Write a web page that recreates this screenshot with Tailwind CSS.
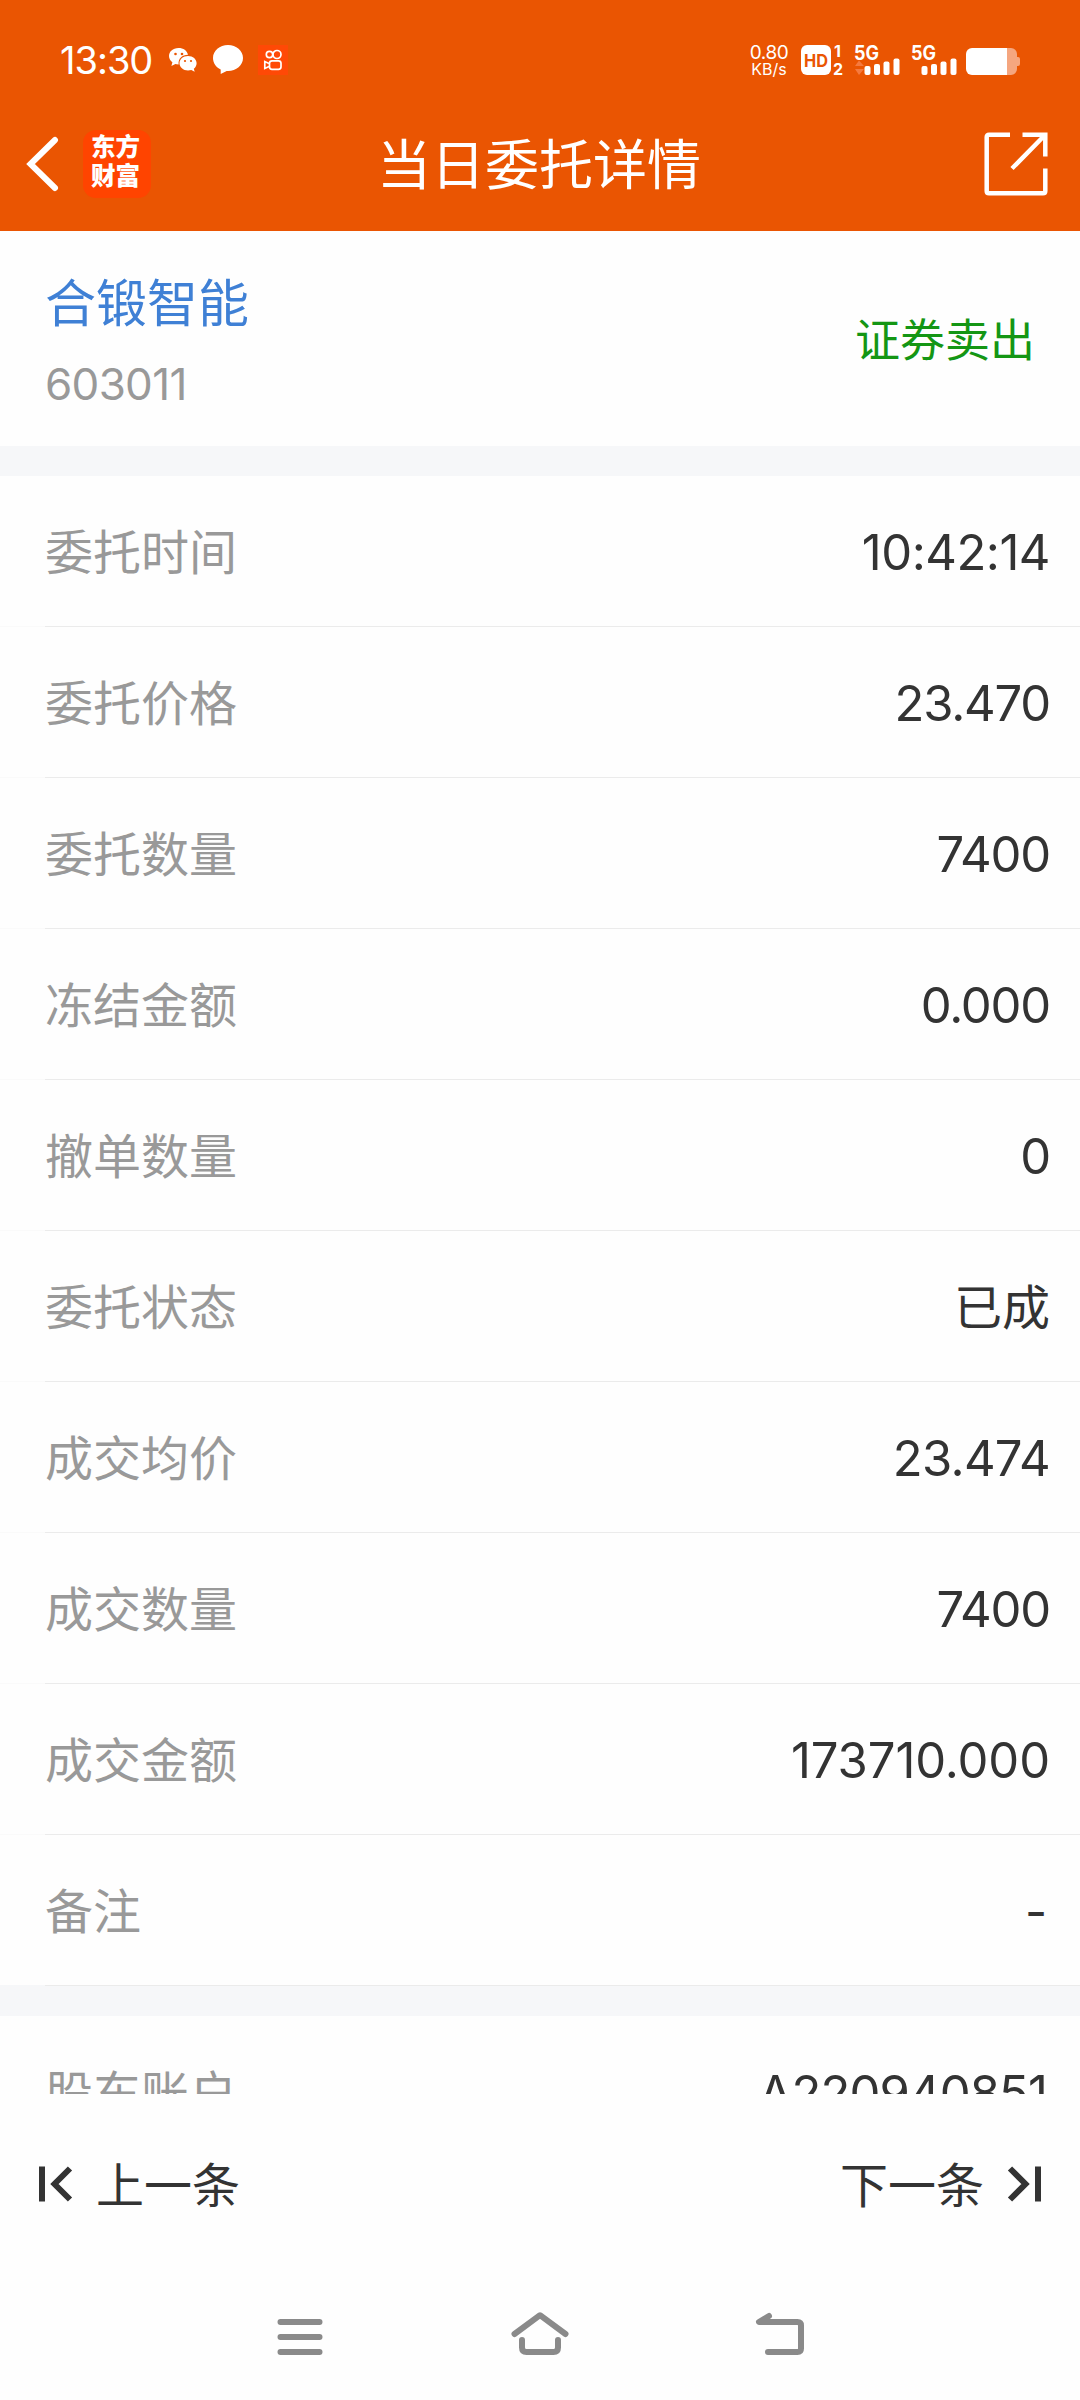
<!DOCTYPE html>
<html lang="zh-CN">
<head>
    <meta charset="UTF-8">
    <meta name="viewport" content="width=device-width, initial-scale=1.0">
    <title>当日委托详情</title>
    <script src="https://cdn.jsdelivr.net/npm/@tailwindcss/browser@4"></script>
</head>
<body class="bg-white font-['Inter','Noto_Sans_CJK_SC',sans-serif]">
    <div id="app" class="w-[1080px] h-[2400px] flex flex-col overflow-hidden bg-[#fefefe]">
        <!-- Header -->
        <header class="h-[231px] shrink-0 bg-[#ea5502] text-white">
            <!-- Status bar -->
            <div class="h-[120px] flex items-center justify-between pl-[60px] pr-[60px]">
                <div class="flex items-center">
                    <span class="w-[108px] text-[38px] leading-none tracking-[-1px] whitespace-nowrap">13:30</span>
                    <svg class="w-[30px] h-[30px]" viewBox="0 0 30 30">
                        <path fill="#fff" d="M10.500 3C4.700 3 1 6.700 1 11c0 2.600 1.300 4.700 3.400 6.200L3.400 21l4-2c1 .3 2 .4 3.200.4C10 13.500 14 9.900 20 9.800 19 5.700 15.500 3 10.500 3z"></path>
                        <path fill="#fff" d="M20 11c-5 0-8.500 3.200-8.500 7.200s3.700 7.200 8.500 7.200c1.200 0 2.300-.2 3.300-.5l3.400 1.900-.9-3.100c1.800-1.300 2.800-3.300 2.800-5.500C28.600 14.200 25 11 20 11z"></path>
                        <g fill="#ea5502"><circle cx="7.500" cy="9" r="1.300"></circle><circle cx="14" cy="9" r="1.300"></circle><circle cx="17" cy="16" r="1.100"></circle><circle cx="23" cy="16" r="1.100"></circle></g>
                    </svg>
                    <svg class="w-[30px] h-[30px] ml-[15px]" viewBox="0 0 30 30">
                        <path fill="#fff" d="M15 0C6.700 0 0 5.800 0 13c0 5 3 9.200 7.700 11.500V29l6-3H15c8.300 0 15-5.800 15-13S23.300 0 15 0z"></path>
                    </svg>
                    <svg class="w-[30px] h-[30px] ml-[15px] bg-[#ff4906]" viewBox="0 0 30 30" fill="none" stroke="#fff" stroke-width="1.700">
                        <circle cx="11.500" cy="9.500" r="3.200"></circle>
                        <circle cx="19" cy="9.500" r="4"></circle>
                        <rect x="11.500" y="15.800" width="11.500" height="8.500" rx="2.500"></rect>
                        <path d="M11 18.500l-4.200-2v7l4.200-2"></path>
                    </svg>
                </div>
                <div class="flex items-center">
                    <div class="w-[38px] mr-[13px] flex flex-col items-center whitespace-nowrap">
                        <span class="text-[19px] leading-[17px] tracking-[-0.5px]">0.80</span>
                        <span class="text-[16px] leading-[16px]">KB/s</span>
                    </div>
                    <svg class="w-[44px] h-[30px] mr-[10px] overflow-visible" viewBox="0 0 44 30" font-family="Inter" font-weight="700">
                        <rect width="30" height="30" rx="6" fill="#fff"></rect>
                        <text x="3" y="21.500" font-size="18" textLength="24" lengthAdjust="spacingAndGlyphs" fill="#ea5502">HD</text>
                        <text x="33" y="12" font-size="16" fill="#fff">1</text>
                        <text x="32" y="30" font-size="16" fill="#fff">2</text>
                    </svg>
                    <svg class="w-[45px] h-[30px] mr-[12px] overflow-visible" viewBox="0 0 45 30" fill="#fff">
                        <text x="-1" y="14.500" font-family="Inter" font-weight="700" font-size="19.500" textLength="25" lengthAdjust="spacingAndGlyphs">5G</text>
                        <path fill="#f57a3f" d="M0 21l4-5.500 5 5.500zM0 24l4 6 5-6z"></path>
                        <rect x="9.500" y="21" width="6" height="9" rx="2"></rect>
                        <rect x="19" y="19" width="6" height="11" rx="2"></rect>
                        <rect x="28.500" y="16.500" width="6" height="13.500" rx="2"></rect>
                        <rect x="38.500" y="13.500" width="6" height="16.500" rx="2"></rect>
                    </svg>
                    <svg class="w-[45px] h-[30px] mr-[9px] overflow-visible" viewBox="0 0 45 30" fill="#fff">
                        <text x="-1" y="14.500" font-family="Inter" font-weight="700" font-size="19.500" textLength="25" lengthAdjust="spacingAndGlyphs">5G</text>
                        <rect x="9.500" y="21" width="6" height="9" rx="2"></rect>
                        <rect x="19" y="19" width="6" height="11" rx="2"></rect>
                        <rect x="28.500" y="16.500" width="6" height="13.500" rx="2"></rect>
                        <rect x="38.500" y="13.500" width="6" height="16.500" rx="2"></rect>
                    </svg>
                    <svg class="w-[54px] h-[30px]" viewBox="0 0 54 30">
                        <path fill="#f5a67f" d="M41 3h4a6 6 0 0 1 6 6v3h1q2 0 2 2v5q0 2-2 2h-1v3a6 6 0 0 1-6 6h-4z"></path>
                        <path fill="#fff" d="M6 3h35v27H6a6 6 0 0 1-6-6V9a6 6 0 0 1 6-6z"></path>
                    </svg>
                </div>
            </div>

            <!-- Title bar -->
            <div class="h-[87px] grid grid-cols-3 items-center pl-[26px] pr-[32px]">
                <div class="flex items-center">
                    <svg class="w-[34px] h-[56px]" viewBox="0 0 34 56" fill="none" stroke="#fff" stroke-width="6">
                        <path stroke-linecap="round" d="M29 4L4.500 28 29 52"></path>
                    </svg>
                    <div class="w-[68px] h-[68px] ml-[23px] rounded-[13px] bg-[#ff4400] text-center font-black text-[24.500px] leading-[29px] pt-[3px] pr-[3px]">
                        东方<br>财富
                    </div>
                </div>
                <h1 class="text-[54px] leading-none whitespace-nowrap justify-self-center -mr-[4px] pt-[5px]">当日委托详情</h1>
                <svg class="w-[64px] h-[64px] justify-self-end" viewBox="0 0 64 64" fill="none" stroke="#fff" stroke-width="4.500">
                    <path d="M26 2.700H5Q2.700 2.700 2.700 5v54q0 2.300 2.300 2.300h54q2.300 0 2.300-2.300V36.500"></path>
                    <path d="M38.500 2.700h22.800V24.500M61 3L28 36.500"></path>
                </svg>
            </div>
        </header>

        <!-- Order details -->
        <main class="h-[1863px] shrink-0 overflow-hidden text-[48px] text-[#333]">
            <div class="h-[215px] flex items-center justify-between px-[45px] pt-[4px]">
                <div class="pt-[6px]">
                    <h2 class="text-[51px] leading-[80px] text-[#3f80d5]">合锻智能</h2>
                    <p class="text-[44px] leading-[80px] tracking-[-0.7px] text-[#999]">603011</p>
                </div>
                <span class="text-[45px] text-[#149614]">证券卖出</span>
            </div>
            <div class="h-[30px] bg-[#f6f7f9]"></div>

            <div class="h-[151px] flex flex-col">
                <div class="flex-1 flex items-center justify-between pt-[4px] pl-[45px] pr-[30px]"><span class="text-[#999]">委托时间</span><span class="text-[49px] tracking-[-0.5px]">10:42:14</span></div>
                <div class="h-px border-l-[45px] border-[#fafafa] bg-[#ebebeb]"></div>
            </div>
            <div class="h-[151px] flex flex-col">
                <div class="flex-1 flex items-center justify-between pt-[4px] pl-[45px] pr-[30px]"><span class="text-[#999]">委托价格</span><span class="text-[49px] tracking-[-1.2px]">23.470</span></div>
                <div class="h-px border-l-[45px] border-[#fafafa] bg-[#ebebeb]"></div>
            </div>
            <div class="h-[151px] flex flex-col">
                <div class="flex-1 flex items-center justify-between pt-[4px] pl-[45px] pr-[30px]"><span class="text-[#999]">委托数量</span><span class="text-[49px] tracking-[-1.2px]">7400</span></div>
                <div class="h-px border-l-[45px] border-[#fafafa] bg-[#ebebeb]"></div>
            </div>
            <div class="h-[151px] flex flex-col">
                <div class="flex-1 flex items-center justify-between pt-[4px] pl-[45px] pr-[30px]"><span class="text-[#999]">冻结金额</span><span class="text-[49px] tracking-[-1.2px]">0.000</span></div>
                <div class="h-px border-l-[45px] border-[#fafafa] bg-[#ebebeb]"></div>
            </div>
            <div class="h-[151px] flex flex-col">
                <div class="flex-1 flex items-center justify-between pt-[4px] pl-[45px] pr-[30px]"><span class="text-[#999]">撤单数量</span><span class="text-[49px] tracking-[-1.2px]">0</span></div>
                <div class="h-px border-l-[45px] border-[#fafafa] bg-[#ebebeb]"></div>
            </div>
            <div class="h-[151px] flex flex-col">
                <div class="flex-1 flex items-center justify-between pt-[4px] pl-[45px] pr-[30px]"><span class="text-[#999]">委托状态</span><span>已成</span></div>
                <div class="h-px border-l-[45px] border-[#fafafa] bg-[#ebebeb]"></div>
            </div>
            <div class="h-[151px] flex flex-col">
                <div class="flex-1 flex items-center justify-between pt-[4px] pl-[45px] pr-[30px]"><span class="text-[#999]">成交均价</span><span class="text-[49px] tracking-[-0.7px]">23.474</span></div>
                <div class="h-px border-l-[45px] border-[#fafafa] bg-[#ebebeb]"></div>
            </div>
            <div class="h-[151px] flex flex-col">
                <div class="flex-1 flex items-center justify-between pt-[4px] pl-[45px] pr-[30px]"><span class="text-[#999]">成交数量</span><span class="text-[49px] tracking-[-1.2px]">7400</span></div>
                <div class="h-px border-l-[45px] border-[#fafafa] bg-[#ebebeb]"></div>
            </div>
            <div class="h-[151px] flex flex-col">
                <div class="flex-1 flex items-center justify-between pt-[4px] pl-[45px] pr-[30px]"><span class="text-[#999]">成交金额</span><span class="text-[49px] tracking-[-0.1px]">173710.000</span></div>
                <div class="h-px border-l-[45px] border-[#fafafa] bg-[#ebebeb]"></div>
            </div>
            <div class="h-[150px] flex items-center justify-between pt-[4px] pl-[45px] pr-[33px]"><span class="text-[#999]">备注</span><span>-</span></div>

            <div class="h-[31px] bg-[#f6f7f9]">
                <div class="h-px ml-[45px] bg-[#ebebeb]"></div>
            </div>
            <div class="h-[150px] flex items-center justify-between pt-[5px] pl-[45px] pr-[33px]"><span class="text-[#999]">股东账户</span><span class="text-[49px] tracking-[-0.9px]">A220940851</span></div>
        </main>

        <!-- Previous / next -->
        <div class="h-[180px] shrink-0 flex items-center justify-between pl-[39px] pr-[39px] text-[48px] text-[#333]">
            <button class="flex items-center">
                <svg class="w-[34px] h-[36px] mr-[23px]" viewBox="0 0 34 36" fill="none" stroke="currentColor" stroke-width="6">
                    <path d="M3 .5v35M31 2.500L15.500 18 31 33.500"></path>
                </svg>
                <span class="pt-[4px]">上一条</span>
            </button>
            <button class="flex items-center">
                <span class="pt-[4px]">下一条</span>
                <svg class="w-[34px] h-[36px] ml-[23px]" viewBox="0 0 34 36" fill="none" stroke="currentColor" stroke-width="6">
                    <path d="M31 .5v35M3 2.500L18.500 18 3 33.500"></path>
                </svg>
            </button>
        </div>

        <!-- System navigation -->
        <nav class="h-[126px] shrink-0 flex items-center justify-center gap-[180px] text-[#8a8a8a]">
            <svg class="w-[60px] h-[60px]" viewBox="0 0 60 60" fill="none" stroke="currentColor" stroke-width="6" stroke-linecap="round">
                <path d="M10.500 15h39M10.500 30h39M10.500 45h39"></path>
            </svg>
            <svg class="w-[60px] h-[60px]" viewBox="0 0 60 60" fill="none" stroke="currentColor" stroke-width="6" stroke-linecap="round" stroke-linejoin="round">
                <path d="M4.500 27L30 8.200 55.500 27M12 33v7.500q0 4.500 4.500 4.500h27q4.500 0 4.500-4.500V33"></path>
            </svg>
            <svg class="w-[60px] h-[60px]" viewBox="0 0 60 60" fill="none" stroke="currentColor" stroke-width="6" stroke-linecap="round" stroke-linejoin="round">
                <path d="M19 9L9 15h38.500q3.500 0 3.500 3.500v23q0 3.500-3.500 3.500H18"></path>
            </svg>
        </nav>
    </div>
</body>
</html>
